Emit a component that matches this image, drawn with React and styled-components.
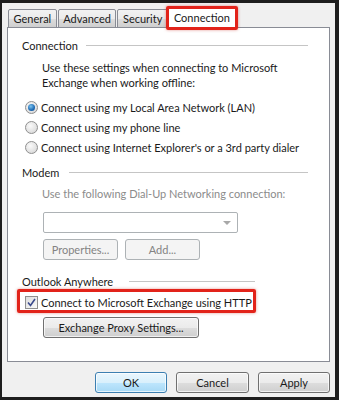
import React from "react";
import styled, { createGlobalStyle, css } from "styled-components";

const Global = createGlobalStyle`
  html, body { margin: 0; padding: 0; background: #f0f0f0; }
  body { font-family: Lato, "Noto Sans", sans-serif; font-size: 11px; color: #1a1a1a; }
  * { box-sizing: border-box; }
`;

const Frame = styled.div`
  width: 339px;
  height: 400px;
  background: #f0f0f0;
  border-style: solid;
  border-color: #1e1e1e;
  border-width: 3px 4px 3px 2px;
  padding: 3px 5px 0 5px;
  display: flex;
  flex-direction: column;
`;

const TabStrip = styled.div`
  display: flex;
  align-items: flex-end;
  height: 22px;
  margin-bottom: -1px;
  position: relative;
  z-index: 1;
  padding-left: 1px;
`;

const Tab = styled.div`
  position: relative;
  height: ${(p) => (p.$active ? 22 : 19)}px;
  padding: 0 ${(p) => (p.$active ? 5 : 4.5)}px;
  margin: 0 ${(p) => (p.$active ? -1 : 1)}px 0 ${(p) => (p.$active ? -1 : 0)}px;
  border: 1px solid #898c95;
  border-bottom: ${(p) => (p.$active ? "none" : "1px solid #898c95")};
  border-radius: 2px 2px 0 0;
  background: ${(p) =>
    p.$active ? "#fff" : "linear-gradient(#f2f2f2 0%, #ebebeb 50%, #dddddd 51%, #cfcfcf 100%)"};
  display: flex;
  align-items: center;
  line-height: 1;
  white-space: nowrap;
  ${(p) =>
    p.$highlight &&
    css`
      &::after {
        content: "";
        position: absolute;
        left: -3px;
        right: -3px;
        top: -1px;
        bottom: -2px;
        border: 3px solid #e2231a;
        border-radius: 2px;
        box-shadow: 0 0 3px rgba(200, 40, 30, 0.5);
      }
    `}
`;

const Panel = styled.div`
  flex: 1;
  background: #fff;
  border: 1px solid #898c95;
  padding-top: 9px;
  display: flex;
  flex-direction: column;
`;

const GroupHeader = styled.div`
  display: flex;
  align-items: center;
  height: 16px;
  margin-left: 14px;
  width: ${(p) => p.$width}px;
  margin-top: ${(p) => p.$mt || 0}px;
  white-space: nowrap;
  &::after {
    content: "";
    flex: 1;
    height: 1px;
    background: #c5c5c5;
    margin-left: ${(p) => p.$gap || 8}px;
  }
`;

const Description = styled.div`
  margin: ${(p) => p.$mt}px 0 0 34px;
  line-height: 15px;
  white-space: nowrap;
  color: ${(p) => (p.$disabled ? "#8b8b8b" : "#1a1a1a")};
`;

const RadioRow = styled.label`
  display: flex;
  align-items: center;
  height: 20px;
  margin-left: 17px;
  margin-top: ${(p) => p.$mt || 0}px;
  gap: 3px;
  white-space: nowrap;
`;

const RadioDot = styled.span`
  flex: none;
  width: 13px;
  height: 13px;
  border-radius: 50%;
  border: 1px solid #8f8f8f;
  background: radial-gradient(circle at 40% 35%, #fafafa 0%, #e2e2e2 60%, #cfcfcf 100%);
  display: flex;
  align-items: center;
  justify-content: center;
  &::after {
    content: "";
    display: ${(p) => (p.$checked ? "block" : "none")};
    width: 7px;
    height: 7px;
    border-radius: 50%;
    background: radial-gradient(circle at 40% 35%, #7cc4ef 0%, #1d6ab4 60%, #0e4a8a 100%);
  }
`;

const Select = styled.div`
  margin: 11px 0 0 35px;
  width: 195px;
  height: 21px;
  border: 1px solid #adb2b5;
  border-radius: 2px;
  background: #fff;
  display: flex;
  align-items: center;
  justify-content: flex-end;
  padding-right: 6px;
`;

const Arrow = styled.span`
  width: 0;
  height: 0;
  border-left: 4px solid transparent;
  border-right: 4px solid transparent;
  border-top: 4px solid #a8a8a8;
`;

const ButtonRow = styled.div`
  display: flex;
  gap: ${(p) => p.$gap || 7}px;
  margin: ${(p) => p.$mt || 0}px 0 0 35px;
`;

const Button = styled.button`
  font: inherit;
  width: ${(p) => p.$w}px;
  height: 21px;
  padding: 0;
  border-radius: 3px;
  white-space: nowrap;
  border: 1px solid ${(p) => (p.$disabled ? "#adb2b5" : p.$default ? "#3c7fb1" : "#707070")};
  color: ${(p) => (p.$disabled ? "#838383" : "#1a1a1a")};
  background: ${(p) =>
    p.$disabled
      ? "#f4f4f4"
      : p.$default
      ? "linear-gradient(#eaf6fd 0%, #d9f0fc 50%, #bee6fd 51%, #a7d9f5 100%)"
      : "linear-gradient(#f2f2f2 0%, #ebebeb 50%, #dddddd 51%, #cfcfcf 100%)"};
  box-shadow: ${(p) => (p.$disabled ? "none" : "inset 0 0 0 1px rgba(255,255,255,0.7)")};
  line-height: 1;
`;

const CheckRow = styled.label`
  position: relative;
  display: flex;
  align-items: center;
  gap: 3px;
  height: 20px;
  width: 222px;
  margin: 3px 0 0 17px;
  white-space: nowrap;
  &::after {
    content: "";
    position: absolute;
    left: -8px;
    right: -9px;
    top: -3px;
    bottom: -1px;
    border: 3px solid #e2231a;
    border-radius: 2px;
    box-shadow: 0 0 3px rgba(200, 40, 30, 0.5);
  }
`;

const CheckBox = styled.span`
  flex: none;
  width: 13px;
  height: 13px;
  border: 1px solid #8f8f8f;
  background: linear-gradient(135deg, #dcdcdc 0%, #fafafa 100%);
  display: flex;
  align-items: center;
  justify-content: center;
`;

const Footer = styled.div`
  height: 35px;
  padding: 10px 0 4px;
  display: flex;
  justify-content: flex-end;
  gap: 9px;
`;

export default function App() {
  return (
    <>
      <Global />
      <Frame>
        <TabStrip>
          <Tab>General</Tab>
          <Tab>Advanced</Tab>
          <Tab>Security</Tab>
          <Tab $active $highlight>Connection</Tab>
        </TabStrip>
        <Panel>
          <GroupHeader $width={286}>Connection</GroupHeader>
          <Description $mt={7}>
            Use these settings when connecting to Microsoft
            <br />
            Exchange when working offline:
          </Description>
          <RadioRow $mt={7}>
            <RadioDot $checked />
            Connect using my Local Area Network (LAN)
          </RadioRow>
          <RadioRow>
            <RadioDot />
            Connect using my phone line
          </RadioRow>
          <RadioRow>
            <RadioDot />
            Connect using Internet Explorer's or a 3rd party dialer
          </RadioRow>
          <GroupHeader $width={286} $mt={7} $gap={10}>Modem</GroupHeader>
          <Description $mt={6} $disabled>
            Use the following Dial-Up Networking connection:
          </Description>
          <Select>
            <Arrow />
          </Select>
          <ButtonRow $mt={6}>
            <Button $w={75} $disabled>Properties...</Button>
            <Button $w={75} $disabled>Add...</Button>
          </ButtonRow>
          <GroupHeader $width={233} $mt={13} $gap={16}>Outlook Anywhere</GroupHeader>
          <CheckRow>
            <CheckBox>
              <svg width="9" height="9" viewBox="0 0 9 9">
                <path d="M1 4.5 L3.5 7.5 L8 1" fill="none" stroke="#3a4a8c" strokeWidth="1.6" />
              </svg>
            </CheckBox>
            Connect to Microsoft Exchange using HTTP
          </CheckRow>
          <ButtonRow $mt={5}>
            <Button $w={156}>Exchange Proxy Settings...</Button>
          </ButtonRow>
        </Panel>
        <Footer>
          <Button $w={72} $default>OK</Button>
          <Button $w={73}>Cancel</Button>
          <Button $w={72}>Apply</Button>
        </Footer>
      </Frame>
    </>
  );
}
